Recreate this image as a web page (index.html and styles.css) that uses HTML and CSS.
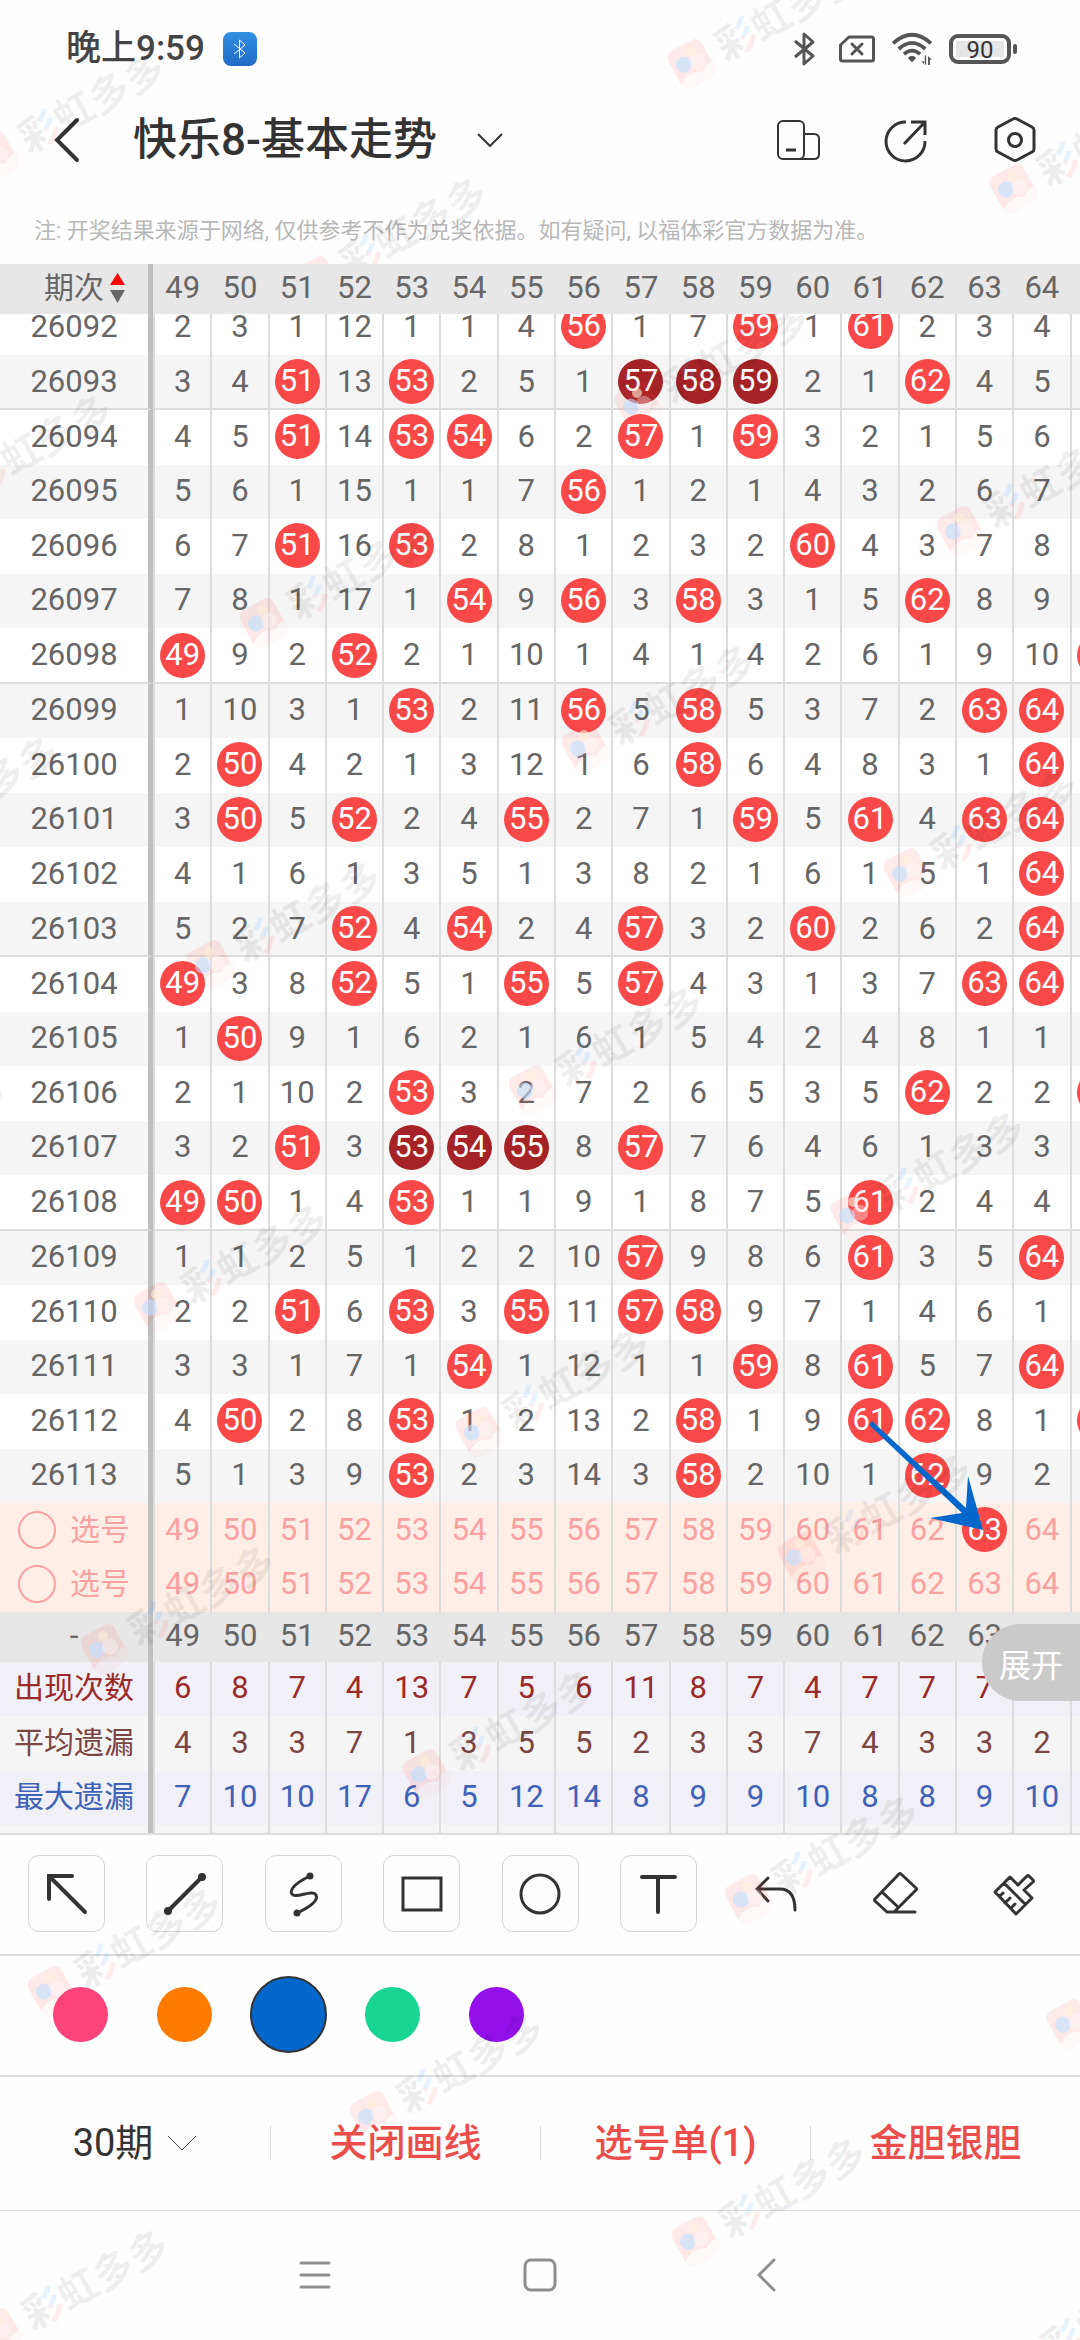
FILE: index.html
```html
<!DOCTYPE html>
<html lang="zh-CN">
<head>
  <meta charset="UTF-8">
  <meta name="viewport" content="width=device-width, initial-scale=1.0">
  <title>快乐8-基本走势</title>
  <link rel="stylesheet" href="styles.css">
</head>
<body>
  <div class="statusbar">
    <span class="clock">晚上9:59</span>
    <span class="bt-badge">
      <svg width="14" height="20" viewBox="0 0 14 20"><path d="M1 5l11 9-5.500 5V1l5.500 5L1 15"/></svg>
    </span>
    <div class="status-icons">
      <svg width="38" height="36" viewBox="0 0 38 36"><path d="M10 10l18 15-9 8V3l9 8-18 15" fill="none" stroke="#555" stroke-width="3" stroke-linejoin="round"/></svg>
      <svg width="36" height="28" viewBox="0 0 36 28"><path d="M10 2h22.500q2 0 2 2v20q0 2-2 2h-29q-2 0-2-2V10z" fill="none" stroke="#555" stroke-width="3" stroke-linejoin="round"/><path d="M13 9l10 10M23 9L13 19" stroke="#555" stroke-width="3" stroke-linecap="round"/></svg>
      <svg width="42" height="34" viewBox="0 0 42 36"><g fill="none" stroke="#555" stroke-width="4"><path d="M1 12Q21-6 41 12"/><path d="M7 18Q21 5 35 18"/><path d="M12.500 23.500Q21 16 29.500 23.500"/></g><path d="M21 32l-4.500-4.500Q21 23 25.500 27.500zM31 31h3l-.5 3.500h1V25h1.500v9.500h-2zM38 35V25.500l4 4h-2V35z" fill="#555"/></svg>
      <span class="battery"><span class="battery-level">90</span></span>
    </div>
  </div>

  <header class="titlebar">
    <button class="icon-btn back" aria-label="返回">
      <svg width="28" height="46" viewBox="0 0 28 46"><path d="M24 3L4 23l20 20" fill="none" stroke="#333" stroke-width="4" stroke-linecap="round"/></svg>
    </button>
    <h1>快乐8-基本走势</h1>
    <button class="icon-btn" aria-label="切换走势">
      <svg width="26" height="14" viewBox="0 0 26 14"><path d="M1 1l12 12L25 1" fill="none" stroke="#333" stroke-width="2"/></svg>
    </button>
    <div class="title-tools">
      <button class="icon-btn" aria-label="横屏">
        <svg width="48" height="48" viewBox="0 0 48 48"><g fill="none" stroke="#333" stroke-width="2"><rect x="3" y="5" width="26" height="38" rx="5"/><path d="M29 18h10q5 0 5 5v15q0 5-5 5H24"/><path d="M11 34h10" stroke-width="3"/></g></svg>
      </button>
      <button class="icon-btn" aria-label="分享">
        <svg width="48" height="48" viewBox="0 0 48 48"><g fill="none" stroke="#333" stroke-width="3"><path d="M23 6a19.500 19.500 0 1 0 19 19"/><path d="M28 6h14v13M42 6L21 28"/></g></svg>
      </button>
      <button class="icon-btn" aria-label="设置">
        <svg width="48" height="48" viewBox="0 0 48 48"><g fill="none" stroke="#333" stroke-width="3" stroke-linejoin="round"><path d="M22 3q2-1 4 0l15 8q2 1 2 3v19q0 2-2 3l-15 8q-2 1-4 0L7 36q-2-1-2-3V14q0-2 2-3z"/><circle cx="24" cy="24" r="6.500"/></g></svg>
      </button>
    </div>
  </header>

  <p class="notice">注: 开奖结果来源于网络, 仅供参考不作为兑奖依据。如有疑问, 以福体彩官方数据为准。</p>

  <main class="trend">
    <table class="grid head">
      <thead>
        <tr id="headRow">
          <th class="issue"><button class="sort">期次
            <svg width="15" height="30" viewBox="0 0 15 30"><path d="M7.500 0L15 12H0z" fill="#f00"/><path d="M0 17h15L7.500 30z" fill="#666"/></svg>
          </button></th>
        </tr>
      </thead>
    </table>
    <table class="grid body">
      <tbody id="rows"></tbody>
      <tfoot id="foot"></tfoot>
    </table>
    <svg class="drawing" width="120" height="116" viewBox="0 0 120 116">
      <path d="M4 1L98 88 100 56 115 110 62 98 94 93 1 5z" fill="#0467cb"/>
    </svg>
    <button class="expand">展开</button>
  </main>

  <div class="toolbar">
    <button class="tool boxed" aria-label="箭头">
      <svg viewBox="0 0 48 48"><path d="M6 29V6h23M6 6l36 36" stroke-width="4" stroke-linecap="round"/></svg>
    </button>
    <button class="tool boxed" aria-label="直线">
      <svg viewBox="0 0 48 48"><path d="M7 41L41 7" stroke-width="4"/><circle class="dot" cx="7" cy="41" r="4"/><circle class="dot" cx="41" cy="7" r="4"/></svg>
    </button>
    <button class="tool boxed" aria-label="曲线">
      <svg viewBox="0 0 48 48"><path d="M31 6C14 14 9 22 14 25s20-6 23 0-8 13-19 18" stroke-width="3"/><circle class="dot" cx="31" cy="6" r="3.500"/><circle class="dot" cx="18" cy="43" r="3.500"/></svg>
    </button>
    <button class="tool boxed" aria-label="矩形">
      <svg viewBox="0 0 48 48"><path d="M5 8h38v32H5z" stroke-width="3"/></svg>
    </button>
    <button class="tool boxed" aria-label="圆形">
      <svg viewBox="0 0 48 48"><circle cx="24" cy="24" r="19" stroke-width="3"/></svg>
    </button>
    <button class="tool boxed" aria-label="文字">
      <svg viewBox="0 0 48 48"><path d="M8 7h33M24 7v35" stroke-width="4" stroke-linecap="round"/></svg>
    </button>
    <button class="tool" aria-label="撤销">
      <svg viewBox="0 0 48 48"><path d="M15 8L4 19l11 12M4 19h23q15 0 15 21" stroke-width="3" stroke-linecap="round"/></svg>
    </button>
    <button class="tool" aria-label="橡皮擦">
      <svg viewBox="0 0 48 48"><path d="M16 42h28M16 42L4 31q-1-1 0-2L28 4q1-1 2 0l15 14q1 1 0 2L23 42M11 22l16 15" stroke-width="3" stroke-linecap="round" stroke-linejoin="round"/></svg>
    </button>
    <button class="tool" aria-label="清空">
      <svg viewBox="0 0 48 48"><path d="M5 22L20 7l8 8L37 6q1-1 2 0l4 4q1 1 0 2l-9 8 8 8-16 16zM14 13l21 21M10 26l3-3M15 33l5-5M21 38l4-4" stroke-width="3" stroke-linecap="round" stroke-linejoin="round"/></svg>
    </button>
  </div>

  <div class="palette">
    <input type="radio" name="color" class="swatch pink" aria-label="粉色">
    <input type="radio" name="color" class="swatch orange" aria-label="橙色">
    <input type="radio" name="color" class="swatch blue" aria-label="蓝色" checked>
    <input type="radio" name="color" class="swatch green" aria-label="绿色">
    <input type="radio" name="color" class="swatch purple" aria-label="紫色">
  </div>

  <div class="actions">
    <button class="action period">30期
      <svg width="30" height="16" viewBox="0 0 30 16"><path d="M1 1l14 14L29 1" fill="none" stroke="#555" stroke-width="1"/></svg>
    </button>
    <button class="action">关闭画线</button>
    <button class="action">选号单(1)</button>
    <button class="action">金胆银胆</button>
  </div>

  <nav class="sysnav">
    <button class="icon-btn" aria-label="菜单">
      <svg width="34" height="34" viewBox="0 0 34 34"><path d="M3 5h28M3 17h28M3 29h28"/></svg>
    </button>
    <button class="icon-btn" aria-label="主页">
      <svg width="34" height="34" viewBox="0 0 34 34"><rect x="2" y="2" width="30" height="30" rx="6"/></svg>
    </button>
    <button class="icon-btn" aria-label="后退">
      <svg width="34" height="34" viewBox="0 0 34 34"><path d="M26 2L11 17l15 15"/></svg>
    </button>
  </nav>

  <svg class="watermark" id="watermark" aria-hidden="true">
    <defs>
      <pattern id="mixed" patternUnits="userSpaceOnUse" x="31" y="-30" width="40" height="60">
        <rect width="23" height="60" fill="#000" opacity=".065"/>
        <rect x="23" width="17" height="32" fill="#3d9bff" opacity=".12"/>
        <rect x="23" y="32" width="17" height="28" fill="#ff3b3b" opacity=".09"/>
      </pattern>
      <linearGradient id="fade" x1="0" y1="0" x2="0" y2="1">
        <stop offset="0" stop-color="#ff3b3b" stop-opacity=".1"/>
        <stop offset="1" stop-color="#ff3b3b" stop-opacity=".12"/>
      </linearGradient>
      <g id="mark">
        <path d="M-19-11q0-9 9-9h20q9 0 9 9v20q-7-2-13 4-11-8-25 1z" fill="url(#fade)"/>
        <path d="M-19 14q15-9 25-1 6-6 15-4 0 13-13 14h-18q-8 0-9-9z" fill="#ff3b3b" opacity=".03"/>
        <circle cx="-7" cy="-2" r="8" fill="#bfe0ff" opacity=".6"/>
        <circle cx="5" cy="-11" r="5" fill="#fff0d8" opacity=".6"/>
        <circle cx="6" cy="2" r="8" fill="#fff" opacity=".35"/>
        <text x="31" y="16"><tspan fill="url(#mixed)">彩</tspan><tspan class="mark-gray">虹多多</tspan></text>
      </g>
    </defs>
  </svg>

  <script>
    const FIRST = 49;
    // a value equal to its column number is a drawn ball, anything else is the miss count
    const draws = [
      ['26092', '2 3 1 12 1 1 4 56 1 7 59 1 61 2 3 4'],
      ['26093', '3 4 51 13 53 2 5 1 57 58 59 2 1 62 4 5'],
      ['26094', '4 5 51 14 53 54 6 2 57 1 59 3 2 1 5 6'],
      ['26095', '5 6 1 15 1 1 7 56 1 2 1 4 3 2 6 7'],
      ['26096', '6 7 51 16 53 2 8 1 2 3 2 60 4 3 7 8'],
      ['26097', '7 8 1 17 1 54 9 56 3 58 3 1 5 62 8 9'],
      ['26098', '49 9 2 52 2 1 10 1 4 1 4 2 6 1 9 10 65'],
      ['26099', '1 10 3 1 53 2 11 56 5 58 5 3 7 2 63 64'],
      ['26100', '2 50 4 2 1 3 12 1 6 58 6 4 8 3 1 64'],
      ['26101', '3 50 5 52 2 4 55 2 7 1 59 5 61 4 63 64'],
      ['26102', '4 1 6 1 3 5 1 3 8 2 1 6 1 5 1 64'],
      ['26103', '5 2 7 52 4 54 2 4 57 3 2 60 2 6 2 64'],
      ['26104', '49 3 8 52 5 1 55 5 57 4 3 1 3 7 63 64'],
      ['26105', '1 50 9 1 6 2 1 6 1 5 4 2 4 8 1 1'],
      ['26106', '2 1 10 2 53 3 2 7 2 6 5 3 5 62 2 2 65'],
      ['26107', '3 2 51 3 53 54 55 8 57 7 6 4 6 1 3 3'],
      ['26108', '49 50 1 4 53 1 1 9 1 8 7 5 61 2 4 4'],
      ['26109', '1 1 2 5 1 2 2 10 57 9 8 6 61 3 5 64'],
      ['26110', '2 2 51 6 53 3 55 11 57 58 9 7 1 4 6 1'],
      ['26111', '3 3 1 7 1 54 1 12 1 1 59 8 61 5 7 64'],
      ['26112', '4 50 2 8 53 1 2 13 2 58 1 9 61 62 8 1 65'],
      ['26113', '5 1 3 9 53 2 3 14 3 58 2 10 1 62 9 2']
    ];
    const stats = [
      ['count', '出现次数', '6 8 7 4 13 7 5 6 11 8 7 4 7 7 7 8'],
      ['avg', '平均遗漏', '4 3 3 7 1 3 5 5 2 3 3 7 4 3 3 2'],
      ['max', '最大遗漏', '7 10 10 17 6 5 12 14 8 9 9 10 8 8 9 10']
    ];
    const numbers = Array.from({ length: 16 }, (_, i) => FIRST + i);

    // length of the run of consecutive balls that column i belongs to
    function runLength(values, i) {
      const hit = n => values[n] === FIRST + n;
      let a = i, b = i;
      while (hit(a - 1)) a--;
      while (hit(b + 1)) b++;
      return b - a + 1;
    }

    function drawRow([issue, text]) {
      const values = text.split(' ').map(Number);
      const cells = values.map((v, i) => {
        if (v !== FIRST + i) return `<td>${v}</td>`;
        const cls = runLength(values, i) >= 3 ? 'ball run' : 'ball';
        return `<td><span class="${cls}">${i < 16 ? v : ''}</span></td>`;
      });
      if (values.length < 17) cells.push('<td></td>');
      const sep = issue % 5 === 3 && issue !== '26113' ? ' class="sep"' : '';
      return `<tr${sep}><th class="issue">${issue}</th>${cells.join('')}</tr>`;
    }

    function pickRow(id, picked) {
      const cells = numbers.map(n =>
        `<td><button class="pick${n === picked ? ' ball' : ''}">${n}</button></td>`);
      return `<tr class="picks"><th class="issue"><span class="pick-label"><input type="radio" name="pick" id="${id}"><label for="${id}">选号</label></span></th>${cells.join('')}<td></td></tr>`;
    }

    const headCells = numbers.map(n => `<th>${n}</th>`).join('') + '<th></th>';
    document.getElementById('headRow').insertAdjacentHTML('beforeend', headCells);
    document.getElementById('rows').innerHTML = draws.map(drawRow).join('');
    document.getElementById('foot').innerHTML =
      pickRow('pick1', 63) + pickRow('pick2', 0) +
      `<tr class="numbers"><th class="issue">-</th>${headCells}</tr>` +
      stats.map(([cls, label, text]) =>
        `<tr class="${cls}"><th class="issue">${label}</th>${text.split(' ').map(v => `<td>${v}</td>`).join('')}<td></td></tr>`
      ).join('') +
      `<tr class="end"><th class="issue"></th>${'<td></td>'.repeat(17)}</tr>`;

    // watermark repeats on a slanted lattice
    const layer = document.getElementById('watermark');
    for (let j = -2; j < 9; j++) {
      for (let i = -4; i < 5; i++) {
        const x = 691 + 322 * i - 53 * j;
        const y = 63 + 125 * i + 342 * j;
        if (x < -200 || x > innerWidth + 50 || y < -50 || y > 2500) continue;
        const use = document.createElementNS('http://www.w3.org/2000/svg', 'use');
        use.setAttribute('href', '#mark');
        use.setAttribute('transform', `translate(${x} ${y}) rotate(-29)`);
        layer.appendChild(use);
      }
    }
  </script>
</body>
</html>
```
FILE: styles.css
```css
* {
  box-sizing: border-box;
}
body {
  position: relative;
  margin: 0;
  min-height: 100vh;
  display: flex;
  flex-direction: column;
  overflow-x: hidden;
  background: #fefefe;
  color: #333;
  font-family: Roboto, "Noto Sans CJK SC", sans-serif;
}
button {
  padding: 0;
  border: none;
  background: none;
  color: inherit;
  font: inherit;
  cursor: pointer;
}
svg {
  display: block;
}
.icon-btn {
  display: flex;
  align-items: center;
  justify-content: center;
}

/* status bar */
.statusbar {
  display: flex;
  align-items: center;
  height: 98px;
  padding: 0 64px 0 66px;
}
.clock {
  color: #444;
  font-size: 35px;
  font-weight: 500;
  line-height: 46px;
}
.bt-badge {
  display: flex;
  align-items: center;
  justify-content: center;
  width: 34px;
  height: 34px;
  margin-left: 18px;
  border-radius: 8px;
  background: linear-gradient(#318fe0, #226bc8);
}
.bt-badge path {
  fill: none;
  stroke: #fff;
  stroke-width: 1;
}
.status-icons {
  display: flex;
  align-items: center;
  gap: 16px;
  margin-left: auto;
}
.battery {
  position: relative;
  width: 62px;
  height: 30px;
  margin-right: 5px;
  padding: 3px;
  border: 4px solid #555;
  border-radius: 9px;
}
.battery::after {
  content: "";
  position: absolute;
  right: -10px;
  top: 6px;
  width: 4px;
  height: 10px;
  border-radius: 2px;
  background: #555;
}
.battery-level {
  display: block;
  height: 16px;
  background: #e5e5e5;
  color: #333;
  font-size: 24px;
  line-height: 18px;
  text-align: center;
}

/* title bar */
.titlebar {
  display: flex;
  align-items: center;
  height: 84px;
  padding: 0 41px 0 53px;
}
.titlebar h1 {
  margin: 0 40px 0 52px;
  font-size: 44px;
  font-weight: 500;
  line-height: 60px;
}
.title-tools {
  display: flex;
  gap: 60px;
  margin-left: auto;
}
.notice {
  margin: 0;
  padding: 24px 34px 8px;
  color: #b8b8b8;
  font-size: 22px;
  line-height: 50px;
  white-space: nowrap;
}

/* trend chart */
.trend {
  position: relative;
  overflow: hidden;
  border-bottom: 2px solid #dcdcdc;
}
.grid {
  width: calc(100% + 47px);
  table-layout: fixed;
  border-collapse: separate;
  border-spacing: 0;
  color: #666;
  font-size: 31px;
  line-height: 44px;
}
.grid th,
.grid td {
  height: 55px;
  padding: 0 0 2px;
  border-left: 2px solid #dcdcdc;
  font-weight: 400;
  text-align: center;
  vertical-align: middle;
}
.grid .issue {
  width: 153px;
  border-left: none;
  border-right: 5px solid #bfbfbf;
}
.grid.head {
  position: relative;
  z-index: 1;
}
/* the list is scrolled a little under the header */
.grid.body {
  margin-top: -14px;
  background: #fff;
}
.grid tr:nth-child(even) > * {
  height: 54px;
}
.grid tbody tr:nth-child(even) {
  background: #f5f5f5;
}
.grid .sep > * {
  padding-bottom: 0;
  border-bottom: 2px solid #dcdcdc;
}
.grid .sep:nth-child(even) > * {
  height: 55px;
}
.grid .sep:nth-child(odd) > * {
  height: 56px;
}
.grid.head tr,
.grid .numbers {
  background: #e7e7e7;
}
.grid.head th,
.grid .numbers > * {
  height: 50px;
  border-left-color: transparent;
}
.sort {
  display: flex;
  align-items: center;
  gap: 6px;
  margin-left: 44px;
  font-size: 30px;
}
.ball {
  display: block;
  width: 45px;
  height: 45px;
  margin: 0 auto;
  border-radius: 50%;
  background: #f94848;
  color: #fff;
}
.ball.run {
  background: #a52226;
}
.picks {
  background: #ffeee6;
  color: #f9a1a1;
}
.pick {
  line-height: 44px;
}
.pick-label {
  display: flex;
  align-items: center;
  gap: 14px;
  margin-left: 18px;
  font-size: 30px;
}
.pick-label input {
  appearance: none;
  width: 38px;
  height: 38px;
  margin: 0;
  border: 2px solid #f9a1a1;
  border-radius: 50%;
}
.count .issue,
.avg .issue,
.max .issue {
  font-size: 30px;
}
.count,
.max {
  background: #f1f0f6;
}
.avg,
.end {
  background: #f5f5f5;
}
.count {
  color: #9b2a2a;
}
.avg {
  color: #7b4545;
}
.max {
  color: #3f62b8;
}
.grid .end > * {
  height: 8px;
}
.drawing {
  position: absolute;
  left: 868px;
  top: 1156px;
}
.expand {
  position: absolute;
  right: 0;
  bottom: 132px;
  width: 98px;
  height: 77px;
  border-radius: 38px 0 0 38px;
  background: #cacaca;
  color: #fff;
  font-size: 32px;
}

/* drawing tools */
.toolbar {
  display: flex;
  align-items: center;
  justify-content: space-between;
  height: 121px;
  padding: 0 28px 2px;
  border-bottom: 2px solid #dcdcdc;
}
.tool {
  display: flex;
  align-items: center;
  justify-content: center;
  width: 77px;
  height: 77px;
}
.tool.boxed {
  border: 1px solid #d5d5d5;
  border-radius: 11px;
}
.tool svg {
  width: 48px;
  height: 48px;
  fill: none;
  stroke: #333;
}
.tool .dot {
  fill: #333;
  stroke: none;
}
.palette {
  display: flex;
  align-items: center;
  gap: 49px;
  height: 121px;
  padding: 0 53px 2px;
  border-bottom: 2px solid #dcdcdc;
}
.swatch {
  appearance: none;
  flex: none;
  width: 55px;
  height: 55px;
  margin: 0;
  border-radius: 50%;
}
.swatch:checked {
  width: 77px;
  height: 77px;
  margin: 0 -11px;
  border: 2px solid #333;
}
.pink { background: #ff447c; }
.orange { background: #ff7b00; }
.blue { background: #0467cb; }
.green { background: #18d594; }
.purple { background: #9310ea; }

/* bottom actions */
.actions {
  display: grid;
  grid-template-columns: repeat(4, 1fr);
  align-items: center;
  height: 134px;
  padding-bottom: 2px;
  border-bottom: 1px solid #dedede;
}
.action {
  height: 34px;
  color: #ea4d4b;
  font-size: 38px;
  font-weight: 500;
  line-height: 34px;
}
.action + .action {
  border-left: 1px solid #dcdcdc;
}
.action.period {
  display: flex;
  align-items: center;
  justify-content: center;
  gap: 14px;
  color: #333;
  font-weight: 400;
}
.sysnav {
  display: flex;
  flex: 1;
  align-items: center;
  justify-content: center;
  gap: 191px;
  min-height: 120px;
  padding-bottom: 2px;
}
.sysnav svg {
  fill: none;
  stroke: #8f8f8f;
  stroke-width: 3;
  stroke-linecap: round;
}

.watermark {
  position: absolute;
  inset: 0;
  width: 100%;
  height: 100%;
  pointer-events: none;
}
.watermark text {
  font-family: "Noto Sans CJK SC", sans-serif;
  font-size: 40px;
  font-weight: 700;
}
.mark-gray {
  fill: rgba(0, 0, 0, 0.065);
}
```
